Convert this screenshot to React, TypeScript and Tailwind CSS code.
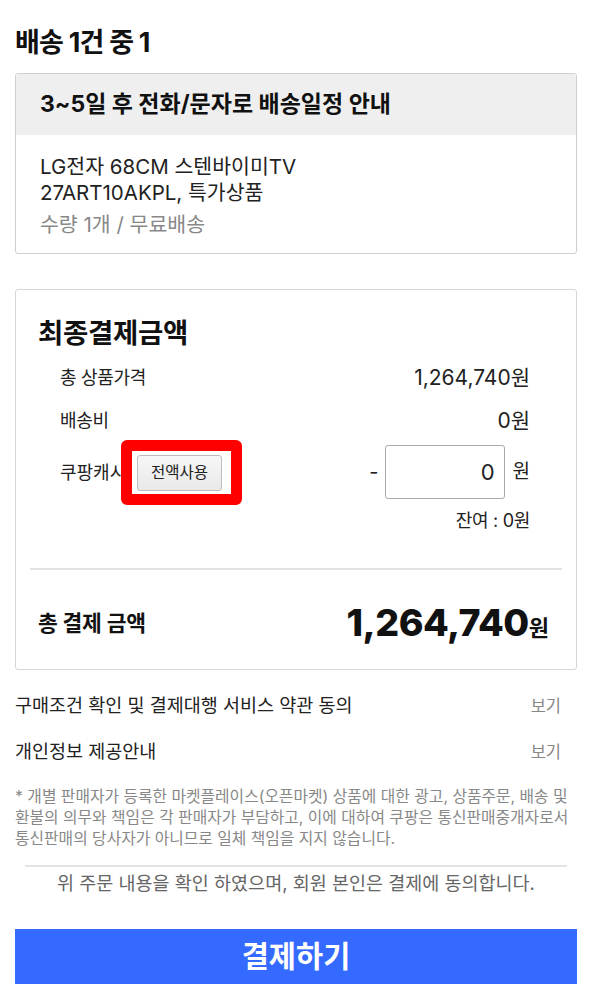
const font = "font-['Inter','Noto_Sans_CJK_KR',sans-serif]";

function Row({ label, value }: { label: string; value: string }) {
  return (
    <div className="flex h-[43px] items-center justify-between text-[18px] text-[#222]">
      <span className="tracking-[-0.3px]">{label}</span>
      <span className="text-[21px]">{value}</span>
    </div>
  );
}

export default function App() {
  return (
    <div className={`${font} bg-white px-[15px] text-[#111]`}>
      <h1 className="pt-[25px] text-[27px] font-bold leading-[36px] tracking-[-0.8px]">배송 1건 중 1</h1>

      <div className="mt-[12px] overflow-hidden rounded-[3px] border border-[#cfcfcf]">
        <div className="flex h-[61px] items-center bg-[#efefef] px-[24px] text-[23px] font-bold">
          3~5일 후 전화/문자로 배송일정 안내
        </div>
        <div className="px-[24px] pt-[19px] pb-[15px] text-[20.5px] leading-[26px] text-[#222]">
          <p>LG전자 68CM 스텐바이미TV</p>
          <p>27ART10AKPL, 특가상품</p>
          <p className="mt-[6px] text-[#888]">수량 1개 / 무료배송</p>
        </div>
      </div>

      <div className="mt-[35px] rounded-[3px] border border-[#d6d6d6]">
        <div className="px-[22px] pt-[24px] text-[27.5px] font-bold leading-[38px] tracking-[-0.3px]">최종결제금액</div>
        <div className="mt-[4px] pl-[44px] pr-[46px]">
          <Row label="총 상품가격" value="1,264,740원" />
          <Row label="배송비" value="0원" />
          <div className="relative mt-[3px] flex h-[54px] items-center justify-between text-[18px] text-[#222]">
            <span>쿠팡캐시</span>
            <div className="absolute left-[61px] top-[-5px] flex h-[65px] w-[121px] items-center rounded-[6px] border-[11px] border-[#ff0000] bg-white pl-[5px]">
              <button className="h-[36px] w-[85px] rounded-[3px] border border-[#bdbdbd] bg-gradient-to-b from-[#f7f7f7] to-[#e9e9e9] text-[15.5px] text-[#222]">
                전액사용
              </button>
            </div>
            <div className="flex items-center">
              <span className="mr-[6px] text-[20px]">-</span>
              <div className="flex h-[54px] w-[120px] items-center justify-end rounded-[3px] border border-[#aaa] pr-[9px] text-[22px]">
                0
              </div>
              <span className="ml-[8px] text-[19px]">원</span>
            </div>
          </div>
          <div className="mt-[10px] text-right text-[18px] leading-[24px] tracking-[-0.3px] text-[#222]">잔여 : 0원</div>
        </div>
        <div className="mx-[14px] mt-[35px] h-[2px] bg-[#e2e2e2]" />
        <div className="flex h-[99px] items-center justify-between pt-[8px] pl-[22px] pr-[27px]">
          <span className="text-[21.5px] font-semibold tracking-[-0.3px]">총 결제 금액</span>
          <span className="font-extrabold">
            <span className="text-[37.5px] tracking-[-0.5px]">1,264,740</span>
            <span className="text-[22px] font-bold">원</span>
          </span>
        </div>
      </div>

      <div className="mt-[18px] flex h-[36px] items-center justify-between text-[18.5px] text-[#222]">
        <span>구매조건 확인 및 결제대행 서비스 약관 동의</span>
        <span className="mr-[16px] text-[16.5px] text-[#888]">보기</span>
      </div>
      <div className="mt-[10px] flex h-[36px] items-center justify-between text-[18.5px] text-[#222]">
        <span>개인정보 제공안내</span>
        <span className="mr-[16px] text-[16.5px] text-[#888]">보기</span>
      </div>

      <p className="mt-[16px] whitespace-nowrap text-[15.8px] leading-[21px] text-[#888]">
        * 개별 판매자가 등록한 마켓플레이스(오픈마켓) 상품에 대한 광고, 상품주문, 배송 및
        <br />
        환불의 의무와 책임은 각 판매자가 부담하고, 이에 대하여 쿠팡은 통신판매중개자로서
        <br />
        통신판매의 당사자가 아니므로 일체 책임을 지지 않습니다.
      </p>

      <div className="mx-[10px] mt-[16px] h-[2px] bg-[#e4e4e4]" />
      <p className="mt-[3px] text-center text-[18.5px] leading-[26px] text-[#666]">
        위 주문 내용을 확인 하였으며, 회원 본인은 결제에 동의합니다.
      </p>

      <button className="mt-[33px] flex h-[55px] w-full items-center justify-center bg-[#346aff] text-[29.5px] font-bold text-white">
        결제하기
      </button>
      <div className="h-[17px]" />
    </div>
  );
}
